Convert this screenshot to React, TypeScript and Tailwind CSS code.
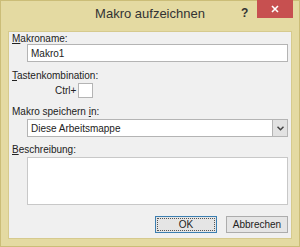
import React from "react";

const font = { fontFamily: '"Liberation Sans", Arial, sans-serif' };

export default function App() {
  return (
    <div
      className="w-[300px] h-[247px] bg-[#e4daa2] border border-[#cbbd78] flex flex-col text-[#222]"
      style={font}
    >
      <div className="relative h-[30px] flex items-center justify-center shrink-0">
        <span className="text-[13px] leading-none text-[#333] mt-[-5px]">Makro aufzeichnen</span>
        <span className="absolute left-[240px] top-[3px] text-[12px] font-bold text-[#333]">?</span>
        <div className="absolute right-[6px] top-[-1px] w-[36px] h-[18px] bg-[#c75050] flex items-center justify-center">
          <svg width="8" height="8" viewBox="0 0 8 8">
            <path d="M1 1 L7 7 M7 1 L1 7" stroke="white" strokeWidth="1.6" />
          </svg>
        </div>
      </div>
      <div className="mx-[7px] mb-[7px] flex-1 bg-[#f0f0f0] border border-[#d6ca8e] flex flex-col px-[3px] text-[10px]">
        <div className="h-[14px] leading-[14px] mt-0">
          <span className="underline">M</span>akroname:
        </div>
        <div className="ml-[15px] mt-[-2px] h-[18px] bg-white border border-[#b4b4b4] flex items-center pl-[3px] shrink-0">
          Makro1
        </div>
        <div className="h-[14px] leading-[14px] mt-[7px]">
          <span className="underline">T</span>astenkombination:
        </div>
        <div className="flex items-center mt-0 ml-[43px] gap-[2px] h-[15px]">
          <span>Ctrl+</span>
          <div className="w-[15px] h-[15px] bg-white border border-[#b4b4b4]" />
        </div>
        <div className="h-[14px] leading-[14px] mt-[7px]">
          Makro speichern <span className="underline">i</span>n:
        </div>
        <div className="ml-[15px] mt-0 h-[18px] bg-white border border-[#b4b4b4] flex items-center shrink-0">
          <span className="pl-[3px] flex-1">Diese Arbeitsmappe</span>
          <div className="w-[15px] h-[16px] bg-[#e2e2e2] border-l border-[#b4b4b4] flex items-center justify-center">
            <svg width="7" height="5" viewBox="0 0 7 5">
              <path d="M0.5 0.8 L3.5 3.8 L6.5 0.8" stroke="#444" strokeWidth="1.5" fill="none" />
            </svg>
          </div>
        </div>
        <div className="h-[14px] leading-[14px] mt-[6px]">
          <span className="underline">B</span>eschreibung:
        </div>
        <div className="ml-[15px] mt-0 h-[48px] bg-white border border-[#c8c8c8] shrink-0" />
        <div className="flex justify-end gap-[9px] mt-[11px]">
          <div className="w-[62px] h-[17px] bg-[#e5e5e5] border border-[#3c7fb1] flex items-center justify-center p-[1px]">
            <div className="w-full h-full border border-dotted border-[#555] flex items-center justify-center">
              OK
            </div>
          </div>
          <div className="w-[62px] h-[17px] bg-[#e5e5e5] border border-[#acacac] flex items-center justify-center">
            Abbrechen
          </div>
        </div>
      </div>
    </div>
  );
}
